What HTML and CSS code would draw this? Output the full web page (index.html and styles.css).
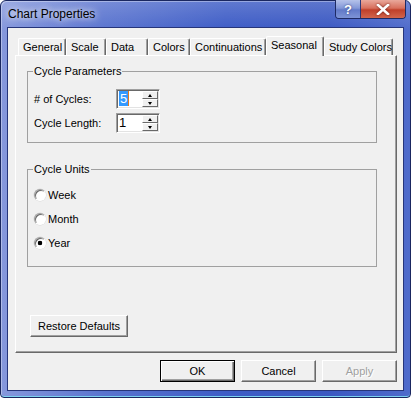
FILE: index.html
```html
<!DOCTYPE html>
<html lang="en">
<head>
    <meta charset="UTF-8">
    <title>Chart Properties</title>
    <link rel="stylesheet" href="styles.css">
</head>
<body>
    <div class="window">
        <div class="titlebar">
            <span class="title">Chart Properties</span>
            <div class="caption-buttons">
                <span class="cap-help">?</span>
                <span class="cap-close">
                    <svg width="14" height="11" viewBox="0 0 14 11">
                        <path d="M2 1 L12 10 M12 1 L2 10" stroke="#fff" stroke-width="2.6" stroke-linecap="square" fill="none"/>
                    </svg>
                </span>
            </div>
        </div>

        <div class="client">
            <div class="tabctl">
                <div class="tab-row">
                    <div class="tab" style="width:48px">General</div>
                    <div class="tab" style="width:40px">Scale</div>
                    <div class="tab" style="width:42px">Data</div>
                    <div class="tab" style="width:42px">Colors</div>
                    <div class="tab" style="width:76px">Continuations</div>
                    <div class="tab tab-active" style="width:58px">Seasonal</div>
                    <div class="tab" style="width:69px">Study Colors</div>
                </div>

                <div class="tab-panel">
                    <fieldset class="group group-params">
                        <legend>Cycle Parameters</legend>
                        <div class="param-grid">
                            <label># of Cycles:</label>
                            <div class="spin">
                                <span class="spin-value"><span class="sel">5</span></span>
                                <span class="spin-btns">
                                    <span class="spin-btn"><i class="arrow-up"></i></span>
                                    <span class="spin-btn"><i class="arrow-down"></i></span>
                                </span>
                            </div>
                            <label>Cycle Length:</label>
                            <div class="spin">
                                <span class="spin-value">1</span>
                                <span class="spin-btns">
                                    <span class="spin-btn"><i class="arrow-up"></i></span>
                                    <span class="spin-btn"><i class="arrow-down"></i></span>
                                </span>
                            </div>
                        </div>
                    </fieldset>

                    <fieldset class="group group-units">
                        <legend>Cycle Units</legend>
                        <div class="radio"><span class="radio-dot"></span>Week</div>
                        <div class="radio"><span class="radio-dot"></span>Month</div>
                        <div class="radio"><span class="radio-dot checked"></span>Year</div>
                    </fieldset>

                    <button class="btn btn-restore">Restore Defaults</button>
                </div>
            </div>

            <div class="dialog-buttons">
                <button class="btn btn-default">OK</button>
                <button class="btn">Cancel</button>
                <button class="btn btn-disabled">Apply</button>
            </div>
        </div>
    </div>
</body>
</html>
```

FILE: styles.css
```css
body {
    margin: 0;
    font-family: 'Liberation Sans', Arial, sans-serif;
    font-size: 11px;
    color: #000;
}
.window {
    width: 411px;
    height: 398px;
    box-sizing: border-box;
    border: 1px solid #1a2760;
    border-radius: 6px 6px 4px 4px;
    padding: 0 6px 6px 6px;
    display: flex;
    flex-direction: column;
    background:
        linear-gradient(180deg, rgba(255, 255, 255, 0.18) 0%, rgba(255, 255, 255, 0) 30px),
        linear-gradient(90deg, #8698dc 0%, #5a74cf 25%, #3d5cc6 55%, #3a58c2 80%, #4f6bcb 100%);
    box-shadow: inset 1px 1px rgba(255, 255, 255, 0.35), inset 0 -1px #7cd2f0;
}
.titlebar {
    height: 26px;
    display: flex;
    align-items: flex-start;
}
.title {
    margin-top: 6px;
    margin-left: 1px;
    font-size: 12px;
    text-shadow: 0 0 6px rgba(255, 255, 255, 0.9), 0 0 10px rgba(255, 255, 255, 0.6);
}
.caption-buttons {
    margin-left: auto;
    margin-right: -2px;
    margin-top: -1px;
    display: flex;
    height: 18px;
    border: 1px solid #1e2a64;
    border-top: none;
    border-radius: 0 0 4px 4px;
    overflow: hidden;
}
.cap-help {
    width: 24px;
    display: flex;
    align-items: center;
    justify-content: center;
    color: #fff;
    font-weight: bold;
    font-size: 13px;
    text-shadow: 0 0 2px #213274;
    background: linear-gradient(180deg, #b5c2ea 0%, #8498d8 45%, #6179c8 55%, #7e94d6 100%);
    border-right: 1px solid #2a3878;
}
.cap-close {
    width: 44px;
    display: flex;
    align-items: center;
    justify-content: center;
    background: linear-gradient(180deg, #e9a89b 0%, #d8705d 45%, #c0402a 55%, #d2654c 100%);
}
.cap-close svg {
    filter: drop-shadow(0 0 1px #6a1a10);
}
.client {
    flex: 1;
    background: #f0f0f0;
    border: 1px solid #26357a;
    display: flex;
    flex-direction: column;
}
.tabctl {
    margin: 8px 6px 0 7px;
}
.tab-row {
    display: flex;
    align-items: flex-end;
    height: 19px;
    padding-left: 3px;
}
.tab {
    box-sizing: border-box;
    height: 17px;
    padding: 2px 0 0 4px;
    white-space: nowrap;
    border-top: 1px solid #fff;
    border-left: 1px solid #fff;
    border-right: 1px solid #696969;
    box-shadow: inset -1px 0 #a0a0a0;
    border-radius: 2px 2px 0 0;
    background: #f0f0f0;
}
.tab-active {
    height: 20px;
    margin-bottom: -1px;
    padding-top: 2px;
    position: relative;
    z-index: 1;
}
.tab-panel {
    box-sizing: border-box;
    height: 298px;
    border: 1px solid;
    border-color: #fff #696969 #696969 #fff;
    box-shadow: inset -1px -1px #a0a0a0;
    padding: 9px 0 0 11px;
}
.group {
    box-sizing: border-box;
    width: 350px;
    margin: 0;
    border: 1px solid #a0a0a0;
    padding: 11px 6px 9px 6px;
}
.group legend {
    padding: 0 1px;
    line-height: 13px;
    margin-left: -1px;
}
.group-units {
    margin-top: 20px;
    padding: 7px 6px 11px 6px;
}
.param-grid {
    display: grid;
    grid-template-columns: 82px 44px;
    row-gap: 4px;
    align-items: center;
}
.spin {
    box-sizing: border-box;
    width: 44px;
    height: 20px;
    display: flex;
    border: 1px solid;
    border-color: #a0a0a0 #fff #fff #a0a0a0;
    box-shadow: inset 1px 1px #696969, inset -1px -1px #e3e3e3;
    background: #fff;
    padding: 1px;
}
.spin-value {
    flex: 1;
    font-size: 13px;
    line-height: 16px;
    padding-left: 1px;
}
.sel {
    background: #3399ff;
    color: #fff;
    padding: 0 1px;
    border-right: 1px solid #e07a20;
}
.spin-btns {
    width: 16px;
    display: flex;
    flex-direction: column;
}
.spin-btn {
    flex: 1;
    box-sizing: border-box;
    background: #f0f0f0;
    border: 1px solid;
    border-color: #fff #696969 #696969 #fff;
    display: flex;
    align-items: center;
    justify-content: center;
}
.arrow-up, .arrow-down {
    width: 0;
    height: 0;
    border-left: 2.5px solid transparent;
    border-right: 2.5px solid transparent;
}
.arrow-up {
    border-bottom: 3px solid #000;
}
.arrow-down {
    border-top: 3px solid #000;
}
.radio {
    height: 24px;
    display: flex;
    align-items: center;
    gap: 2px;
}
.radio-dot {
    box-sizing: border-box;
    width: 12px;
    height: 12px;
    border-radius: 50%;
    border: 1px solid;
    border-color: #a0a0a0 #fff #fff #a0a0a0;
    box-shadow: inset 1px 1px #696969, 0 0 0 0.5px #d8d8d8;
    background: #fff;
}
.radio-dot.checked {
    background: radial-gradient(circle, #000 0, #000 2px, #fff 2.6px);
}
.btn {
    box-sizing: border-box;
    width: 75px;
    height: 22px;
    padding: 0;
    font-family: inherit;
    font-size: 11px;
    color: #000;
    background: #f0f0f0;
    border: 1px solid;
    border-color: #fff #696969 #696969 #fff;
    box-shadow: inset -1px -1px #a0a0a0;
}
.btn-restore {
    width: 98px;
    margin: 48px 0 0 3px;
    display: block;
}
.btn-default {
    border: 1px solid #000;
    box-shadow: inset 1px 1px #fff, inset -1px -1px #696969, inset -2px -2px #a0a0a0;
}
.btn-disabled {
    color: #a0a0a0;
    text-shadow: 1px 1px #fff;
}
.dialog-buttons {
    display: flex;
    justify-content: flex-end;
    gap: 6px;
    margin: 7px 6px 0 0;
}
```
